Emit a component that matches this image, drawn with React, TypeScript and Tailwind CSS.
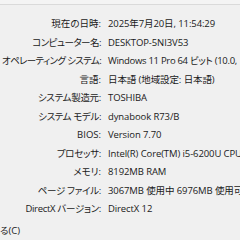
const rows: [string, React.ReactNode, string][] = [
  ["現在の日時", "2025年7月20日, 11:54:29", ""],
  ["コンピューター名", "DESKTOP-5NI3V53", "tracking-[-0.5px]"],
  [
    "オペレーティング システム",
    <span className="tracking-[-0.3px]">
      Windows 11 Pro 64 ビット (10.0,<span className="ml-[3px] inline-block w-[4px] h-[9px] align-middle bg-[#f0b860]" />
    </span>,
    "tracking-[-0.65px]",
  ],
  ["言語", "日本語 (地域設定: 日本語)", ""],
  ["システム製造元", "TOSHIBA", "tracking-[-0.3px]"],
  ["システム モデル", "dynabook R73/B", "tracking-[-0.4px]"],
  ["BIOS", "Version 7.70", ""],
  ["プロセッサ", "Intel(R) Core(TM) i5-6200U CPU @ 2.30GHz", "tracking-[-0.3px]"],
  ["メモリ", "8192MB RAM", ""],
  ["ページ ファイル", "3067MB 使用中 6976MB 使用可能", "tracking-[-0.3px]"],
  ["DirectX バージョン", "DirectX 12", "tracking-[-0.3px]"],
];

export default function App() {
  return (
    <div
      className="w-[240px] h-[240px] overflow-hidden bg-[#f0f0f0] text-[#1a1a1a] text-[9.5px] [font-feature-settings:'palt']"
      style={{ fontFamily: '"Open Sans", "Noto Sans CJK JP", sans-serif' }}
    >
      <div className="h-[5px] bg-[#f4f4f4] border-b border-[#dadada]" />
      <div className="pt-[10px]">
        {rows.map(([label, value, tr], i) => (
          <div key={i} className="flex h-[18.5px] items-center whitespace-nowrap">
            <div className={`w-[101px] shrink-0 text-right ${tr}`}>{label}:</div>
            <div className="pl-[7px] tracking-[-0.1px]">{value}</div>
          </div>
        ))}
      </div>
      <div className="mt-[5px] whitespace-nowrap">る(C)</div>
    </div>
  );
}
